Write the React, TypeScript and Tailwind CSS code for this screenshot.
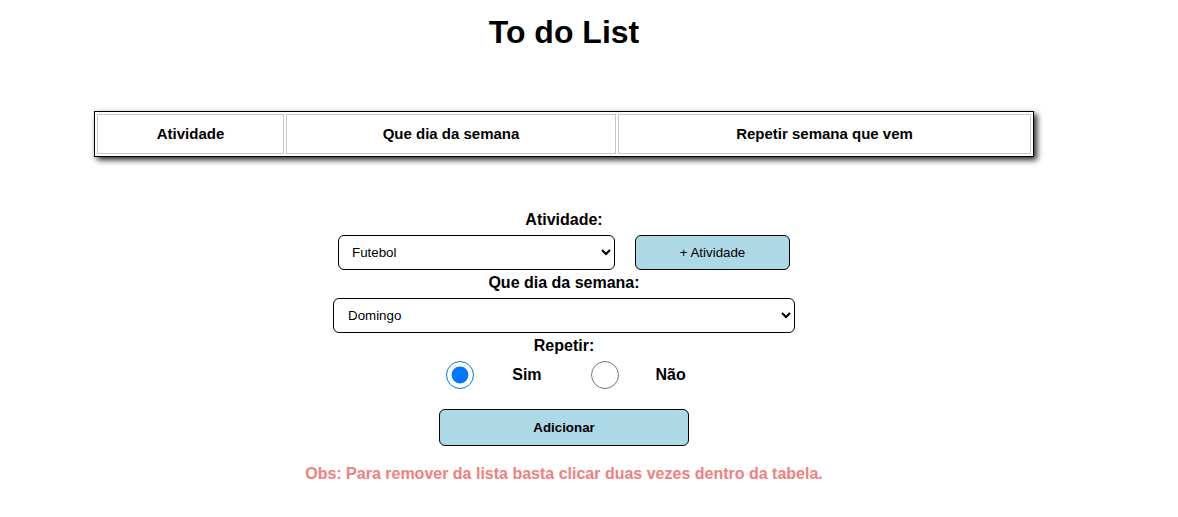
import React, { useState } from "react";

const atividades = ["Futebol", "Natação", "Academia", "Leitura"];
const dias = ["Domingo", "Segunda", "Terça", "Quarta", "Quinta", "Sexta", "Sábado"];

export default function App() {
  const [repetir, setRepetir] = useState("sim");

  return (
    <div className="w-[1128px] font-['Liberation_Sans',Arial,sans-serif] text-black">
      <h1 className="pt-[14px] text-center text-[32px] font-bold leading-[37px]">To do List</h1>

      {/* tabela */}
      <div className="mt-[60px] pl-[94px]">
        <table className="w-[940px] table-fixed border-separate border-spacing-[2px] border border-black bg-white shadow-[3px_3px_6px_rgba(0,0,0,0.85)]">
          <thead>
            <tr>
              <th className="w-[187px] border border-[#c8c8c8] py-[10px] text-[15px] leading-[18px] font-bold">Atividade</th>
              <th className="w-[330px] border border-[#c8c8c8] py-[10px] text-[15px] leading-[18px] font-bold">Que dia da semana</th>
              <th className="border border-[#c8c8c8] py-[10px] text-[15px] leading-[18px] font-bold">Repetir semana que vem</th>
            </tr>
          </thead>
          <tbody></tbody>
        </table>
      </div>

      {/* formulario */}
      <div className="mt-[54px] flex flex-col items-center">
        <label className="text-[16px] font-bold leading-[18px]">Atividade:</label>
        <div className="mt-[6px] flex gap-[20px]">
          <select className="h-[35px] w-[277px] rounded-[6px] border border-black bg-white px-[9px] text-[13.333px]">
            {atividades.map((a) => (
              <option key={a}>{a}</option>
            ))}
          </select>
          <button className="h-[35px] w-[155px] rounded-[6px] border border-black bg-[#add8e6] text-[13.333px]">
            + Atividade
          </button>
        </div>

        <label className="mt-[4px] text-[16px] font-bold leading-[18px]">Que dia da semana:</label>
        <select className="mt-[6px] h-[35px] w-[462px] rounded-[6px] border border-black bg-white px-[10px] text-[13.333px]">
          {dias.map((d) => (
            <option key={d}>{d}</option>
          ))}
        </select>

        <label className="mt-[4px] text-[16px] font-bold leading-[18px]">Repetir:</label>
        <div className="mt-[6px] flex items-center pl-[4px]">
          <input
            type="radio"
            name="repetir"
            checked={repetir === "sim"}
            onChange={() => setRepetir("sim")}
            className="h-[28px] w-[28px] accent-[#0075ff]"
          />
          <span className="ml-[38px] text-[16px] font-bold">Sim</span>
          <input
            type="radio"
            name="repetir"
            checked={repetir === "nao"}
            onChange={() => setRepetir("nao")}
            className="ml-[49px] h-[28px] w-[28px] accent-[#0075ff]"
          />
          <span className="ml-[37px] text-[16px] font-bold">Não</span>
        </div>

        <button className="mt-[20px] h-[37px] w-[250px] rounded-[6px] border border-black bg-[#add8e6] text-[13.333px] font-bold">
          Adicionar
        </button>

        <p className="mt-[19px] text-[16px] font-bold leading-[18px] text-[#f08080]">
          Obs: Para remover da lista basta clicar duas vezes dentro da tabela.
        </p>
      </div>
    </div>
  );
}
